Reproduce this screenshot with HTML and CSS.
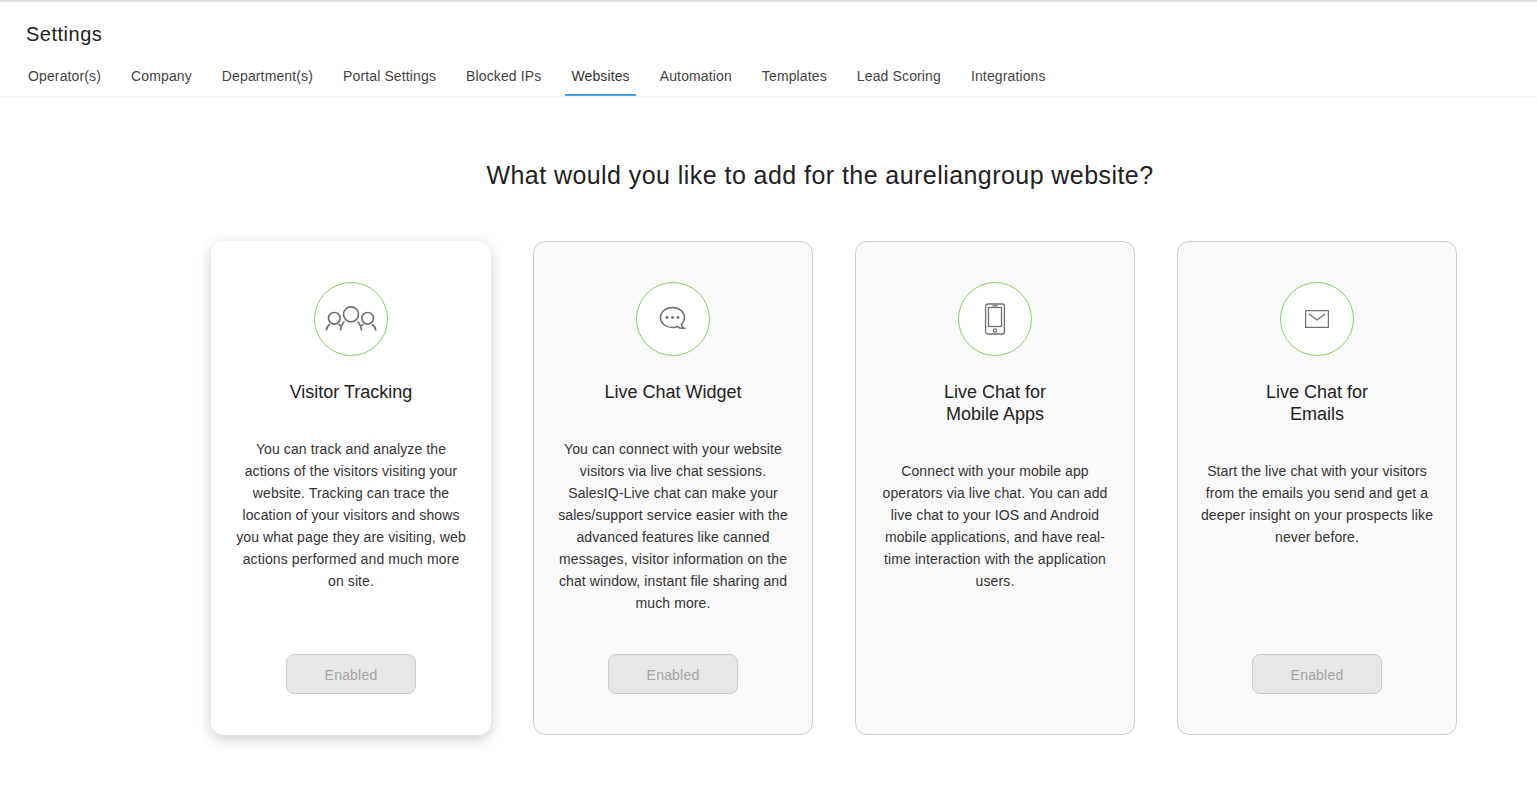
FILE: index.html
```html
<!DOCTYPE html>
<html lang="en">
    <head>
        <title>Settings</title>
        <link rel="stylesheet" href="styles.css">
    </head>
    <body>
        <div class="header">
            <h1 class="page-title">Settings</h1>
            <div class="tabs">
                <a class="tab">Operator(s)</a>
                <a class="tab">Company</a>
                <a class="tab">Department(s)</a>
                <a class="tab">Portal Settings</a>
                <a class="tab">Blocked IPs</a>
                <a class="tab active">Websites</a>
                <a class="tab">Automation</a>
                <a class="tab">Templates</a>
                <a class="tab">Lead Scoring</a>
                <a class="tab">Integrations</a>
            </div>
        </div>
        <div class="content">
            <h2 class="question">What would you like to add for the aureliangroup website?</h2>
            <div class="cards">
                <div class="card selected">
                    <div class="circle">
                        <svg width="52" height="28" viewBox="0 0 52 28" fill="none" stroke="#707070" stroke-width="1.7">
                            <circle cx="26" cy="9.300" r="7.500"/>
                            <circle cx="9.300" cy="13.300" r="5.800"/>
                            <circle cx="42.700" cy="13.300" r="5.800"/>
                            <path d="M1.200 25.500C1.500 23 3 20.500 5 19.500M13.500 19.200c1 .5 2 1 3 2.300M15.500 25.500c.3-3.500 1.500-6.500 4-9M32.500 16.500c2.500 2.500 3.700 5.500 4 9M35.500 21.500c1-1.300 2-1.800 3-2.300M47 19.500c2 1 3.500 3.500 3.800 6"/>
                        </svg>
                    </div>
                    <h3 class="card-title">Visitor Tracking</h3>
                    <p class="card-text">You can track and analyze the actions of the visitors visiting your website. Tracking can trace the location of your visitors and shows you what page they are visiting, web actions performed and much more on site.</p>
                    <button class="enabled-btn">Enabled</button>
                </div>
                <div class="card">
                    <div class="circle">
                        <svg width="28" height="26" viewBox="0 0 28 26" fill="none" stroke="#707070" stroke-width="1.6">
                            <path d="M13.500 1.500c6.500 0 12 4.200 12 10 0 2.800-1.200 5-3 6.800.2 1.700 1 3 2.500 3.900-2.500.3-4.600-.2-6.300-1.600-1.600.6-3.400.9-5.200.9-6.500 0-12-4-12-10s5.500-10 12-10z"/>
                            <g fill="#707070" stroke="none">
                                <circle cx="8" cy="11.500" r="1.400"/>
                                <circle cx="13.500" cy="11.500" r="1.400"/>
                                <circle cx="19" cy="11.500" r="1.400"/>
                            </g>
                        </svg>
                    </div>
                    <h3 class="card-title">Live Chat Widget</h3>
                    <p class="card-text">You can connect with your website visitors via live chat sessions. SalesIQ-Live chat can make your sales/support service easier with the advanced features like canned messages, visitor information on the chat window, instant file sharing and much more.</p>
                    <button class="enabled-btn">Enabled</button>
                </div>
                <div class="card">
                    <div class="circle">
                        <svg width="22" height="32" viewBox="0 0 22 32" fill="none" stroke="#707070" stroke-width="1.300">
                            <rect x="1.600" y="1" width="18.800" height="30" rx="2"/>
                            <rect x="4.500" y="4.500" width="13" height="19"/>
                            <path d="M8.500 2.800h5"/>
                            <circle cx="11" cy="27.500" r="1.700"/>
                        </svg>
                    </div>
                    <h3 class="card-title">Live Chat for<br>Mobile Apps</h3>
                    <p class="card-text">Connect with your mobile app operators via live chat. You can add live chat to your IOS and Android mobile applications, and have real-time interaction with the application users.</p>
                </div>
                <div class="card">
                    <div class="circle">
                        <svg width="24" height="18" viewBox="0 0 24 18" fill="none" stroke="#707070" stroke-width="1.300">
                            <rect x="0.600" y="0.600" width="22.800" height="16.800"/>
                            <path d="M4 4l8 6 8-6"/>
                        </svg>
                    </div>
                    <h3 class="card-title">Live Chat for<br>Emails</h3>
                    <p class="card-text">Start the live chat with your visitors from the emails you send and get a deeper insight on your prospects like never before.</p>
                    <button class="enabled-btn">Enabled</button>
                </div>
            </div>
        </div>
    </body>
</html>
```

FILE: styles.css
```css
* { box-sizing: border-box; }
body { margin: 0; background-color: #fff; font-family: "Liberation Sans", Arial, sans-serif; color: #222; }

.header { border-top: 2px solid #ddd; border-bottom: 1px solid #eee; height: 97px; padding: 20px 0 0 22px; }
.page-title { margin: 0 0 0 4px; font-size: 20px; line-height: 24px; font-weight: normal; letter-spacing: 0.5px; }
.tabs { display: flex; gap: 18px; margin-top: 9px; }
.tab { height: 41px; padding: 11px 6px 0; font-size: 14px; line-height: 20px; letter-spacing: 0.13px; color: #444; border-bottom: 2px solid transparent; }
.tab.active { color: #333; border-bottom-color: #4a9fdc; }

.content { padding-left: 211px; }
.question { margin: 60px 0 0; width: 1218px; text-align: center; font-size: 25px; line-height: 36px; font-weight: normal; letter-spacing: 0.44px; }
.cards { display: flex; gap: 42px; margin-top: 48px; padding-bottom: 40px; }
.card { display: flex; flex-direction: column; align-items: center; width: 280px; height: 494px; padding: 40px 24px; background-color: #f9f9f9; border: 1px solid #ccc; border-radius: 12px; }
.card.selected { background-color: #fff; border-color: #fff; box-shadow: 0 4px 14px rgba(0, 0, 0, 0.2); }

.circle { display: flex; align-items: center; justify-content: center; flex: none; width: 74px; height: 74px; background-color: #fff; border: 1px solid #8ccb6a; border-radius: 50%; }
.card-title { margin: 25px 0 0; text-align: center; font-size: 18px; line-height: 22px; font-weight: normal; }
.card-text { margin: 35px 0 0; width: 234px; text-align: center; font-size: 14px; line-height: 22px; letter-spacing: 0.11px; color: #333; }
.enabled-btn { margin-top: auto; flex: none; width: 130px; height: 40px; padding: 2px 0 0; background-color: #e7e7e7; border: 1px solid #ccc; border-radius: 8px; font-family: inherit; font-size: 14px; letter-spacing: 0.2px; color: #a4a4a4; }
```
